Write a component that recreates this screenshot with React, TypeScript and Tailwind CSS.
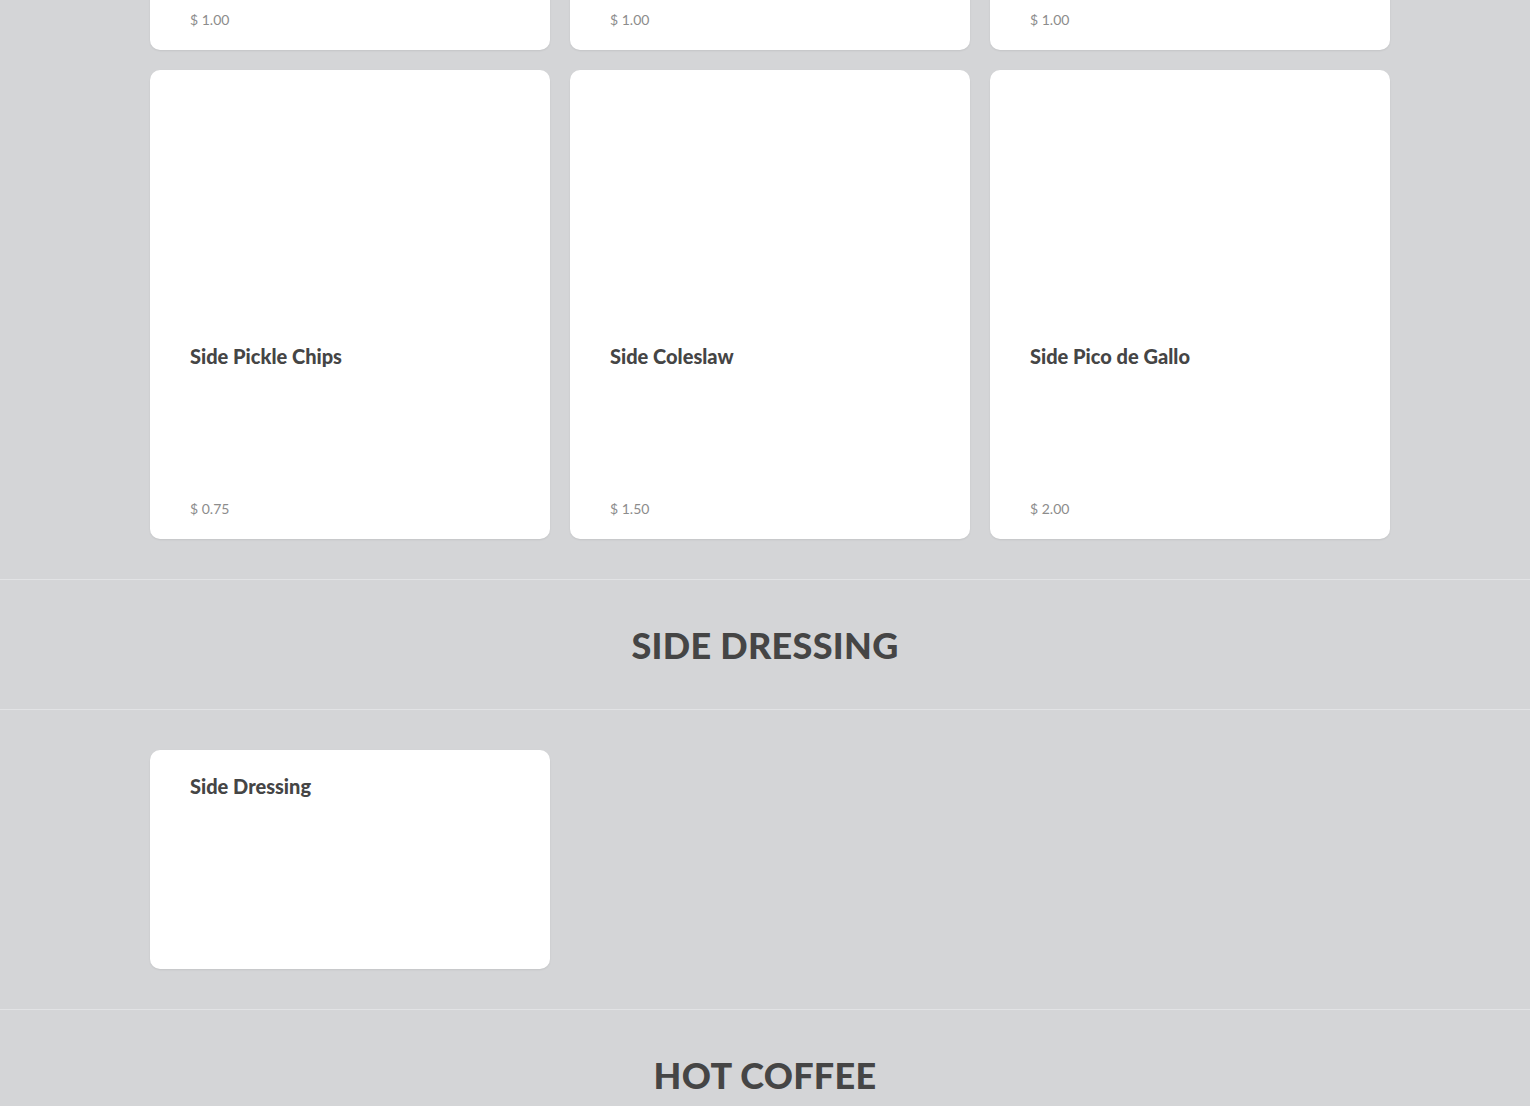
const font = { fontFamily: "Lato, 'Noto Sans', sans-serif" };

type Item = { name: string; price?: string; image?: boolean };

const sections: { title?: string; items: Item[]; hiddenTop?: boolean }[] = [
  {
    hiddenTop: true,
    items: [
      { name: "", price: "$ 1.00", image: true },
      { name: "", price: "$ 1.00", image: true },
      { name: "", price: "$ 1.00", image: true },
      { name: "Side Pickle Chips", price: "$ 0.75", image: true },
      { name: "Side Coleslaw", price: "$ 1.50", image: true },
      { name: "Side Pico de Gallo", price: "$ 2.00", image: true },
    ],
  },
  { title: "SIDE DRESSING", items: [{ name: "Side Dressing" }] },
  { title: "HOT COFFEE", items: [] },
];

function Card({ item }: { item: Item }) {
  return (
    <div className="flex flex-col rounded-[10px] bg-white shadow-[0_1px_2px_rgba(0,0,0,0.08)]">
      {item.image && <div className="h-[250px]" />}
      <div className="flex h-[219px] flex-col justify-between px-10 pt-[24px] pb-[20px]">
        <h3 className="text-[20px] leading-[24px] font-black text-[#454545]">{item.name}</h3>
        {item.price && <span className="text-[14px] leading-[20px] font-normal text-[#8c8c8c]">{item.price}</span>}
      </div>
    </div>
  );
}

function SectionHeader({ title }: { title: string }) {
  return (
    <div className="border-t border-b border-t-[#e2e3e5] border-b-[#e2e3e5]">
      <div className="flex h-[129px] items-center justify-center">
        <h2 className="text-[36px] font-black tracking-[0.3px] text-[#454545]">{title}</h2>
      </div>
    </div>
  );
}

export default function App() {
  return (
    <div className="min-h-screen overflow-hidden bg-[#d4d5d7]" style={font}>
      {sections.map((s, i) => (
        <div key={i}>
          {s.title && <SectionHeader title={s.title} />}
          {s.items.length > 0 && (
            <div className={`mx-auto grid w-[1250px] grid-cols-3 gap-5 pl-[10px] ${s.hiddenTop ? "-mt-[419px] pb-10" : "py-10"}`}>
              {s.items.map((it, j) => (
                <Card key={j} item={it} />
              ))}
            </div>
          )}
        </div>
      ))}
    </div>
  );
}
